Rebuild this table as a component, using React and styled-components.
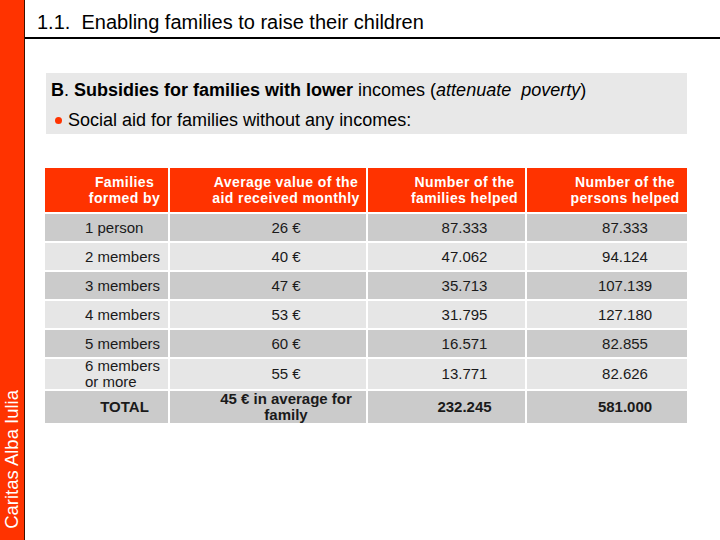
import React from 'react';
import styled, { createGlobalStyle } from 'styled-components';

const GlobalStyle = createGlobalStyle`
  html, body {
    margin: 0;
    padding: 0;
    background: #ffffff;
  }
  body {
    font-family: "Liberation Sans", Arial, sans-serif;
  }
`;

const Page = styled.div`
  display: flex;
  width: 720px;
  height: 540px;
  overflow: hidden;
  background: #ffffff;
`;

const SideBar = styled.div`
  flex: 0 0 25px;
  background: #ff3300;
  border-right: 1px solid #3a1200;
  display: flex;
  flex-direction: column;
  justify-content: flex-end;
  align-items: center;
  padding-bottom: 11px;
  box-sizing: border-box;
`;

const SideLabel = styled.span`
  writing-mode: vertical-rl;
  transform: rotate(180deg);
  color: #ffffff;
  font-size: 18.5px;
  white-space: nowrap;
`;

const Main = styled.div`
  flex: 1;
  display: flex;
  flex-direction: column;
`;

const TitleBar = styled.div`
  height: 39px;
  border-bottom: 2px solid #000000;
  display: flex;
  align-items: flex-end;
  padding: 0 0 3px 12px;
  box-sizing: border-box;
`;

const Title = styled.h1`
  margin: 0;
  font-size: 20px;
  line-height: 24px;
  font-weight: normal;
  color: #000000;
  white-space: pre;
`;

const InfoBox = styled.div`
  margin: 34px 0 0 21px;
  width: 641px;
  height: 61px;
  background: #e8e8e8;
  padding: 5px 0 0 5px;
  box-sizing: border-box;
  color: #000000;
`;

const Heading = styled.div`
  font-size: 18px;
  line-height: 24px;
  font-weight: bold;
  white-space: pre;

  span,
  em {
    font-weight: normal;
  }
`;

const Bullet = styled.div`
  display: flex;
  align-items: center;
  gap: 6px;
  margin-top: 7px;
  padding-left: 4px;
  font-size: 18px;
  line-height: 22px;

  &::before {
    content: '';
    width: 7px;
    height: 7px;
    border-radius: 50%;
    background: #ff3300;
  }
`;

const Table = styled.div`
  margin: 34px 0 0 20px;
  width: 642px;
  display: grid;
  grid-template-columns: 123px 196px 157px 160px;
  column-gap: 2px;
  row-gap: 2px;
`;

const HeadCell = styled.div`
  background: #ff3300;
  color: #ffffff;
  font-size: 14px;
  font-weight: bold;
  line-height: 16px;
  letter-spacing: 0.4px;
  height: 44px;
  display: flex;
  align-items: center;
  justify-content: center;
  text-align: center;
  padding-left: 36px;
  box-sizing: border-box;
`;

const Cell = styled.div`
  background: ${(p) => (p.$dark ? '#cbcbcb' : '#e6e6e6')};
  color: #1a1a1a;
  font-size: 15px;
  line-height: 16px;
  font-weight: ${(p) => (p.$bold ? 'bold' : 'normal')};
  height: ${(p) => p.$h}px;
  display: flex;
  align-items: center;
  justify-content: ${(p) => (p.$left ? 'flex-start' : 'center')};
  text-align: ${(p) => (p.$left ? 'left' : 'center')};
  padding-left: ${(p) => (p.$left ? 40 : 36)}px;
  box-sizing: border-box;
`;

const headers = [
  ['Families', 'formed by'],
  ['Average value of the', 'aid received monthly'],
  ['Number of the', 'families helped'],
  ['Number of the', 'persons helped'],
];

const rows = [
  ['1 person', '26 €', '87.333', '87.333'],
  ['2 members', '40 €', '47.062', '94.124'],
  ['3 members', '47 €', '35.713', '107.139'],
  ['4 members', '53 €', '31.795', '127.180'],
  ['5 members', '60 €', '16.571', '82.855'],
  [['6 members', 'or more'], '55 €', '13.771', '82.626'],
];

const Lines = ({ value }) =>
  Array.isArray(value) ? (
    <div>
      {value.map((l) => (
        <div key={l}>{l}</div>
      ))}
    </div>
  ) : (
    value
  );

const App = () => (
  <>
    <GlobalStyle />
    <Page>
      <SideBar>
        <SideLabel>Caritas Alba Iulia</SideLabel>
      </SideBar>
      <Main>
        <TitleBar>
          <Title>1.1.  Enabling families to raise their children</Title>
        </TitleBar>
        <InfoBox>
          <Heading>
            B<span>. </span>Subsidies for families with lower <span>incomes (</span>
            <em>attenuate  poverty</em>
            <span>)</span>
          </Heading>
          <Bullet>Social aid for families without any incomes:</Bullet>
        </InfoBox>
        <Table>
          {headers.map((h) => (
            <HeadCell key={h.join()}>
              <Lines value={h} />
            </HeadCell>
          ))}
          {rows.map((r, i) =>
            r.map((v, j) => (
              <Cell
                key={`${i}-${j}`}
                $dark={i % 2 === 0}
                $left={j === 0}
                $h={i === 5 ? 30 : 27}
              >
                <Lines value={v} />
              </Cell>
            ))
          )}
          <Cell $dark $bold $h={32}>TOTAL</Cell>
          <Cell $dark $bold $h={32}>
            <Lines value={['45 € in average for', 'family']} />
          </Cell>
          <Cell $dark $bold $h={32}>232.245</Cell>
          <Cell $dark $bold $h={32}>581.000</Cell>
        </Table>
      </Main>
    </Page>
  </>
);

export default App;
